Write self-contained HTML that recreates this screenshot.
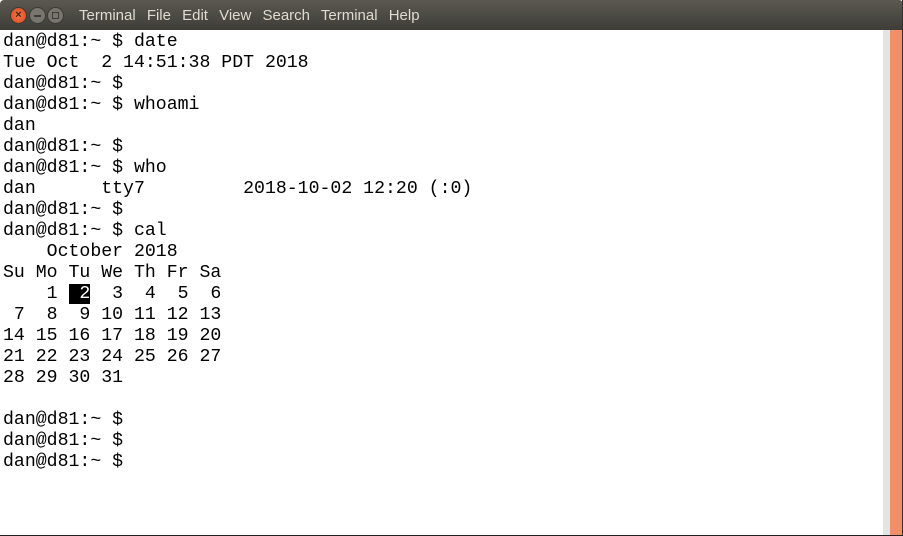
<!DOCTYPE html>
<html><head><style>
html,body{margin:0;padding:0;width:903px;height:536px;overflow:hidden;background:#fff}
.tb{position:absolute;left:0;top:0;width:903px;height:30px;background:linear-gradient(#5a5850,#3e3d38);border-radius:4px 4px 0 0}
.btn{position:absolute;top:7px;width:17px;height:17px;border-radius:50%;box-sizing:border-box}
.menu{position:absolute;left:79px;top:7px;font:15px "Liberation Sans",sans-serif;color:#dfdbd2;white-space:pre;word-spacing:1.4px}
.term{position:absolute;left:3px;top:32px;margin:0;font:18.2px/21px "Liberation Mono","DejaVu Sans Mono",monospace;color:#000;white-space:pre}
.hl{background:#000;color:#fff}
.sb1{position:absolute;left:883px;top:30px;width:7px;height:506px;background:#e4e4e4}
.sb2{position:absolute;left:890px;top:30px;width:12px;height:506px;background:#f08f68}
.rb{position:absolute;left:902px;top:0;width:1px;height:536px;background:#333}
.bb{position:absolute;left:0;top:535px;width:903px;height:1px;background:#222}
</style></head><body>
<div class="tb"></div>
<div class="btn" style="left:10px;background:radial-gradient(#f2774a,#d8491c);border:1px solid #3a3a36;text-align:center;font:bold 11px/15px 'Liberation Sans',sans-serif;color:#4a2010">×</div>
<div class="btn" style="left:29px;background:#77756e;border:1px solid #3a3a36"><div style="position:absolute;left:4px;top:7px;width:7px;height:2px;background:#3c3b37"></div></div>
<div class="btn" style="left:47px;background:#77756e;border:1px solid #3a3a36"><div style="position:absolute;left:4px;top:4px;width:7px;height:7px;border:1px solid #3c3b37;box-sizing:border-box"></div></div>
<div class="menu">Terminal  File  Edit  View  Search  Terminal  Help</div>
<pre class="term">dan@d81:~ $ date
Tue Oct  2 14:51:38 PDT 2018
dan@d81:~ $
dan@d81:~ $ whoami
dan
dan@d81:~ $
dan@d81:~ $ who
dan      tty7         2018-10-02 12:20 (:0)
dan@d81:~ $
dan@d81:~ $ cal
    October 2018
Su Mo Tu We Th Fr Sa
    1 <span class="hl"> 2</span>  3  4  5  6
 7  8  9 10 11 12 13
14 15 16 17 18 19 20
21 22 23 24 25 26 27
28 29 30 31

dan@d81:~ $
dan@d81:~ $
dan@d81:~ $</pre>
<div class="sb1"></div><div class="sb2"></div><div class="rb"></div><div class="bb"></div>
</body></html>
